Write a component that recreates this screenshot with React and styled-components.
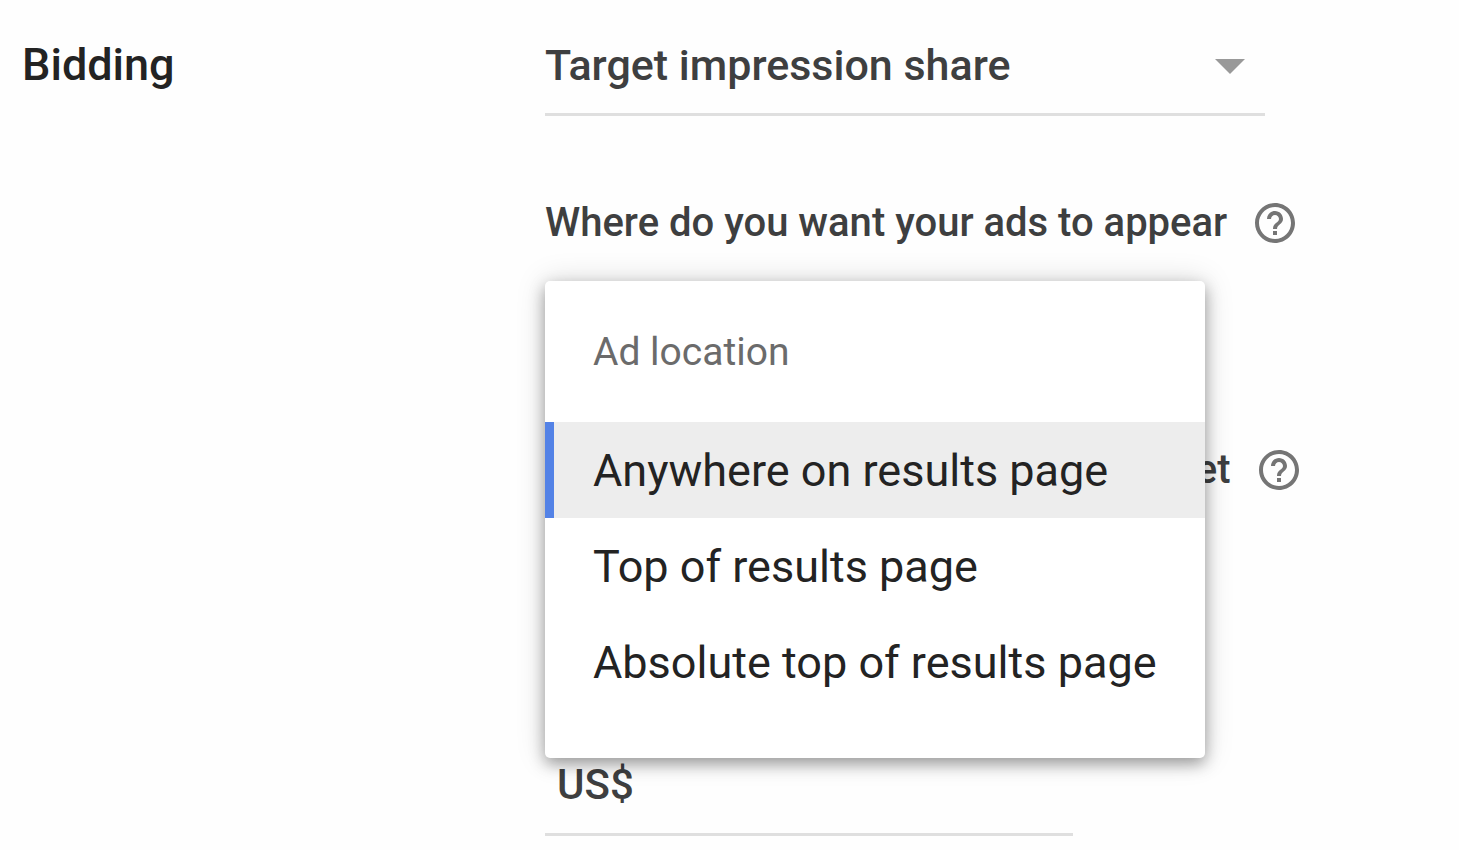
import React, { useState } from "react";
import styled, { createGlobalStyle } from "styled-components";
import { MdHelpOutline } from "react-icons/md";

const locations = [
  "Anywhere on results page",
  "Top of results page",
  "Absolute top of results page",
];

const CSSReset = createGlobalStyle`
  *,
  *::before,
  *::after {
    margin: 0;
    padding: 0;
    box-sizing: border-box;
  }

  body {
    background-color: #fefefe;
    color: #3e3f40;
    font-family: Roboto, "Liberation Sans", sans-serif;
  }
`;

const Section = styled.section`
  display: grid;
  grid-template-columns: minmax(160px, 523px) minmax(0, 1fr);
  padding: 16px 22px 12px;
`;

const Title = styled.h2`
  color: #232323;
  font-size: 45px;
  font-weight: 500;
  line-height: 98px;
`;

const Settings = styled.div`
  display: flex;
  flex-direction: column;
`;

const StrategyField = styled.div`
  position: relative;
  max-width: 720px;
  margin-bottom: 83px;
`;

const StrategySelect = styled.select`
  display: block;
  width: 100%;
  height: 100px;
  appearance: none;
  background: transparent;
  border: none;
  border-bottom: 3px solid #dfdfdf;
  outline: none;
  color: inherit;
  font-family: inherit;
  font-size: 43px;
  font-weight: 500;
`;

const Caret = styled.svg`
  position: absolute;
  right: 20px;
  top: 43px;
  width: 30px;
  height: 15px;
  fill: #999;
  pointer-events: none;
`;

const LabelRow = styled.div`
  display: flex;
  align-items: center;
  gap: 24px;
  height: 48px;
`;

const Label = styled.label`
  font-size: 40px;
  font-weight: 500;
  line-height: 48px;
  white-space: nowrap;
`;

const HelpButton = styled.button`
  display: flex;
  background: none;
  border: none;
  color: #757575;
  cursor: pointer;
`;

const LocationField = styled.div`
  position: relative;
  height: 132px;
  margin: 34px 0 33px;
`;

const Menu = styled.div`
  position: absolute;
  z-index: 1;
  top: 0;
  left: 0;
  width: 660px;
  padding-bottom: 48px;
  background-color: #fff;
  border-radius: 5px;
  box-shadow: 0 6px 15px rgba(0, 0, 0, 0.34), 0 0 30px rgba(0, 0, 0, 0.15);
`;

const MenuHeading = styled.h3`
  padding: 1px 48px 0;
  color: #6b6b6b;
  font-size: 39px;
  font-weight: 400;
  line-height: 140px;
`;

const Option = styled.button`
  display: block;
  width: 100%;
  height: 96px;
  padding-left: 39px;
  background-color: ${(props) => (props.$selected ? "#ededed" : "transparent")};
  border: none;
  border-left: 9px solid ${(props) => (props.$selected ? "#5382e6" : "transparent")};
  color: #232323;
  font-family: inherit;
  font-size: 45px;
  text-align: left;
  white-space: nowrap;
  cursor: pointer;
`;

const InputField = styled.div`
  display: flex;
  align-items: center;
  max-width: 528px;
  height: 100px;
  margin-top: ${(props) => props.$spaceAbove};
  padding-left: 12px;
  border-bottom: 3px solid #dfdfdf;
  font-size: 42px;
  font-weight: 500;
`;

const Input = styled.input`
  flex: 1;
  min-width: 0;
  padding-left: 12px;
  background: transparent;
  border: none;
  outline: none;
  color: inherit;
  font: inherit;
`;

const Help = ({ topic }) => (
  <HelpButton type="button" aria-label={`Help: ${topic}`}>
    <MdHelpOutline size={48} />
  </HelpButton>
);

const App = () => {
  const [location, setLocation] = useState(locations[0]);

  return (
    <>
      <CSSReset />
      <Section>
        <Title>Bidding</Title>
        <Settings>
          <StrategyField>
            <StrategySelect aria-label="Bidding strategy">
              <option>Target impression share</option>
            </StrategySelect>
            <Caret viewBox="0 0 30 15" aria-hidden="true">
              <path d="M0 0h30L15 15z" />
            </Caret>
          </StrategyField>

          <LabelRow>
            <Label as="span" id="location-label">
              Where do you want your ads to appear
            </Label>
            <Help topic="ad location" />
          </LabelRow>
          <LocationField>
            <Menu role="listbox" aria-labelledby="location-label">
              <MenuHeading>Ad location</MenuHeading>
              {locations.map((name) => (
                <Option
                  key={name}
                  type="button"
                  role="option"
                  aria-selected={name === location}
                  $selected={name === location}
                  onClick={() => setLocation(name)}
                >
                  {name}
                </Option>
              ))}
            </Menu>
          </LocationField>

          <LabelRow>
            <Label htmlFor="share">Percent (%) impression share to target</Label>
            <Help topic="impression share" />
          </LabelRow>
          <InputField $spaceAbove="8px">
            <Input id="share" type="text" />
          </InputField>

          <InputField $spaceAbove="134px">
            <label htmlFor="bid-limit">US$</label>
            <Input id="bid-limit" type="text" />
          </InputField>
        </Settings>
      </Section>
    </>
  );
};

export default App;
